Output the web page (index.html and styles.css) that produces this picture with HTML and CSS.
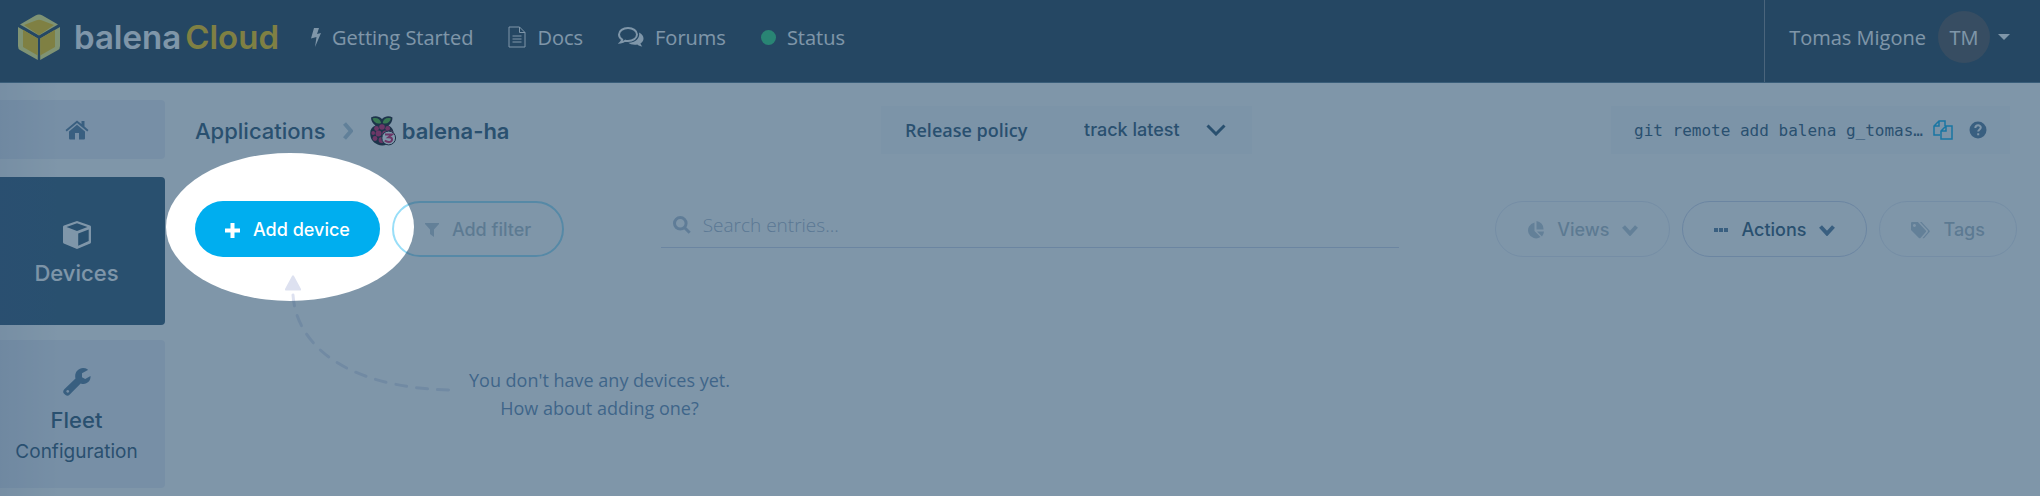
FILE: index.html
```
<!DOCTYPE html>
<html lang="en">
<head>
    <meta charset="UTF-8">
    <meta name="viewport" content="width=device-width, initial-scale=1.0">
    <title>balena-ha | balenaCloud</title>
    <link rel="stylesheet" href="styles.css">
</head>
<body>
    <div class="app">
        <!-- Top bar -->
        <header class="topbar">
            <a class="logo" href="#home">
                <svg class="logo-mark" viewBox="0 0 42 46" aria-hidden="true">
                    <path class="cube-outer" d="M2 10.500 17.500 1.400q3.500-2 7 0L40 10.500 21 21.500zM0 13 19.800 24.500V46L2 36Q0 35 0 32zM42 13 22.200 24.500V46L40 36q2-1 2-4z"/>
                    <path class="cube-inner" d="M6 11 18.500 6.200q2.500-1 5 0L36 11 21 21.200zM5 15.800 19.800 24.500V41.500L5 33zM37 15.800 22.200 24.500V41.500L37 33z"/>
                </svg>
                <span class="logo-text">balena<span class="accent">Cloud</span></span>
            </a>
            <nav class="topnav">
                <a href="#start">
                    <svg class="icon-bolt" viewBox="0 0 10 19" aria-hidden="true"><path d="M3 0h5L6 6l4-1L4 19l1.500-10L0 10.500z"/></svg>
                    <span>Getting Started</span>
                </a>
                <a href="#docs">
                    <svg class="icon-doc" viewBox="0 0 18 22" aria-hidden="true"><path class="line" d="M1 1h10.500L17 6.500V21H1zM11.500 1v5.500H17M4.500 10h9M4.500 13h9M4.500 16h9"/></svg>
                    <span>Docs</span>
                </a>
                <a href="#forums">
                    <svg class="icon-chat" viewBox="0 0 26 20" aria-hidden="true"><path class="line" d="M10 1c5 0 9 2.900 9 6.500S15 14 10 14c-1 0-2 0-2.800-.3C5.800 14.700 4 15.300 2.500 15.500c1-.9 1.500-1.800 1.700-3C2.200 11.300 1 9.500 1 7.500 1 3.900 5 1 10 1z"/><path d="M21 5.500c6 3 5.500 8.500 1.500 10.800.2 1.300 1 2.200 1.800 3.200-2.300-.2-3.800-.9-5-2-4 .6-7.300-.3-9-1.800 7 .3 12-4.200 10.700-10.200z"/></svg>
                    <span>Forums</span>
                </a>
                <a href="#status">
                    <span class="status-dot"></span>
                    <span>Status</span>
                </a>
            </nav>
            <button class="account" type="button">
                <span>Tomas Migone</span>
                <span class="avatar">TM</span>
                <svg class="icon-caret" viewBox="0 0 12 6" aria-hidden="true"><path d="M0 0h12L6 6z"/></svg>
            </button>
        </header>

        <div class="layout">
            <!-- Sidebar -->
            <nav class="sidebar">
                <a class="side-item side-home" href="#apps" aria-label="Home">
                    <svg class="icon-home" viewBox="0 0 24 20" aria-hidden="true"><path d="M12 4.800 20 11.500V18.500q0 1-1 1h-5V13h-4v6.500H5q-1 0-1-1v-7zM12 .5 16.500 4V1h3v5.600L23.500 10l-1.200 1.500L12 3 1.700 11.500.5 10z"/></svg>
                </a>
                <a class="side-item active" href="#devices">
                    <svg class="icon-cube" viewBox="0 0 28 28" aria-hidden="true"><path fill-rule="evenodd" d="M14 0 27 4.500q1 .4 1 1.500v15q0 1-.8 1.500L14 28 .8 22.500Q0 22 0 21V6q0-1.100 1-1.500zM14 2.300 3.500 6 14 10 24.500 6zM25.700 8.500 15.200 12.600v12.200L25.700 20z"/></svg>
                    <span class="side-title">Devices</span>
                </a>
                <a class="side-item" href="#fleet">
                    <svg class="icon-wrench" viewBox="0 0 28 28" aria-hidden="true"><path fill-rule="evenodd" d="M24 2.500 19 5.200v4l3.200 1.800L27.500 8C28 12 25 16 20.500 16q-1.500 0-2.800-.5L6.800 26.500q-2 2-4.300.6l-1.600-1.600q-1.600-2 .4-4.300L12.500 10.500C11 5 15 0 20 0q2.500 0 4.500 1.200.8.600-.5 1.300zM4.700 22a1.400 1.400 0 1 0 .1 0z"/></svg>
                    <span class="side-title">Fleet</span>
                    <span class="side-sub">Configuration</span>
                </a>
            </nav>

            <!-- Main content -->
            <main class="main">
                <div class="heading">
                    <div class="breadcrumb">
                        <a href="#apps">Applications</a>
                        <svg class="icon-next" viewBox="0 0 10 18" aria-hidden="true"><path class="line" d="M1.500 1.500 8 9l-6.500 7.500"/></svg>
                        <span class="app-name">
                            <svg class="icon-pi" viewBox="0 0 26 30" aria-hidden="true">
                                <path class="pi-dark" d="M1 1.500C5-.5 9 0 12 3c3-3 7-3.500 10.500-1.500C22.500 5 21 8 18.500 9.500c4.500 2 6 7 5 10.500C23 25 17 30 12 29.500 6 29 1 25 .5 20-.5 15 1 11 5.500 9.500 3 8 1 5 1 1.500z"/>
                                <path class="pi-leaf" d="M2.500 2.500c4-1.300 7.500 0 8.700 4.500-4.200 1.600-7.500-.7-8.700-4.500zM21 2.500c-4-1.300-7.500 0-8.300 4.500 4 1.600 7.200-.7 8.300-4.500z"/>
                                <g class="pi-berry"><circle cx="12" cy="11" r="2.800"/><circle cx="6.500" cy="12.500" r="2.400"/><circle cx="17.700" cy="12.500" r="2.400"/><circle cx="8.500" cy="17.500" r="3"/><circle cx="15.300" cy="17.500" r="3"/><circle cx="3.200" cy="17" r="1.900"/><circle cx="5" cy="22.500" r="2.400"/><circle cx="11.500" cy="24" r="2.900"/><circle cx="21" cy="16.500" r="1.900"/></g>
                                <circle class="pi-badge" cx="18.700" cy="22" r="6.900"/>
                                <path class="pi-digit" d="M15 18.500h7l-3.500 2.800c4.800 0 4.600 4.600.3 4.600q-2.400 0-4-1.400"/>
                            </svg>
                            balena-ha
                        </span>
                    </div>
                    <div class="panel release">
                        <label for="release">Release policy</label>
                        <span class="select-wrap">
                            <select id="release"><option>track latest</option></select>
                            <svg class="icon-select" viewBox="0 0 20 12" aria-hidden="true"><path class="line" d="M1.500 1.500 10 10l8.500-8.500"/></svg>
                        </span>
                    </div>
                    <div class="panel remote">
                        <code>git remote add balena g_tomas…</code>
                        <button class="icon-btn copy" type="button" aria-label="Copy">
                            <svg class="icon-copy" viewBox="0 0 20 20" aria-hidden="true"><path class="line" d="M7 15H1V6l5-5h6v5M6 1v5H1M8 11l5-5h6v13H8zM13 6v5H8"/></svg>
                        </button>
                        <button class="icon-btn" type="button" aria-label="Help">
                            <svg class="icon-help" viewBox="0 0 18 18" aria-hidden="true"><circle cx="9" cy="9" r="8.500"/><path class="help-mark" d="M6.300 7c.2-3.600 5.500-3.300 5.500-.4 0 1.800-2.600 1.900-2.600 4M9.200 12.300v2"/></svg>
                        </button>
                    </div>
                </div>

                <div class="toolbar">
                    <div class="spot-anchor">
                        <button class="btn btn-primary" type="button">
                            <svg class="icon-plus" viewBox="0 0 15 15" aria-hidden="true"><path d="M5.500 0h4v5.500H15v4H9.500V15h-4V9.500H0v-4h5.500z"/></svg>
                            Add device
                        </button>
                        <div class="spotlight"></div>
                    </div>
                    <button class="btn btn-filter" type="button" disabled>
                        <svg class="icon-filter" viewBox="0 0 14 14" aria-hidden="true"><path d="M0 0h14v1L9 6.500V14l-4-3V6.500L0 1z"/></svg>
                        Add filter
                    </button>
                    <div class="search">
                        <svg class="icon-search" viewBox="0 0 18 18" aria-hidden="true"><circle class="line" cx="7.300" cy="7.300" r="5.800"/><path class="line" d="m11.700 11.700 5 5"/></svg>
                        <input type="text" placeholder="Search entries..." aria-label="Search entries">
                    </div>
                    <div class="toolbar-end">
                        <button class="btn btn-muted" type="button" disabled>
                            <svg class="icon-pie" viewBox="0 0 17 18" aria-hidden="true"><path d="M7.500 1.500V10l6 6A8 8 0 1 1 7.500 1.500zM9.500 0A8 8 0 0 1 16.500 8.500H9.500zM10 10.500h7q-.3 3-2 5z"/></svg>
                            Views
                            <svg class="icon-down" viewBox="0 0 16 11" aria-hidden="true"><path class="line" d="M1.500 1.500 8 8.500l6.500-7"/></svg>
                        </button>
                        <button class="btn btn-outline" type="button">
                            <svg class="icon-dots" viewBox="0 0 14 4" aria-hidden="true"><path d="M0 0h4v4H0zM5 0h4v4H5zM10 0h4v4h-4z"/></svg>
                            Actions
                            <svg class="icon-down" viewBox="0 0 16 11" aria-hidden="true"><path class="line" d="M1.500 1.500 8 8.500l6.500-7"/></svg>
                        </button>
                        <button class="btn btn-muted" type="button" disabled>
                            <svg class="icon-tags" viewBox="0 0 18 16" aria-hidden="true"><path fill-rule="evenodd" d="M0 1q0-1 1-1h5.500L14 8q.6.8 0 1.500L9 15q-.7.700-1.500 0L0 7.500zM3.200 1.800a1.400 1.400 0 1 0 .1 0zM8.500 0h1.500l7.500 8q.6.800 0 1.500L12.500 15q-.8.600-1.500.2L16 9.500V8z"/></svg>
                            Tags
                        </button>
                    </div>
                </div>

                <!-- Empty state -->
                <div class="empty">
                    <svg class="arrow" viewBox="0 0 168 120" aria-hidden="true">
                        <path class="arrow-head" d="M9 2q1-1.500 2 0l7 13q.5 1.500-1 1.500H3Q1.500 16.500 2 15z"/>
                        <path class="arrow-line" d="M10 21C13 68 58 113 166 116"/>
                    </svg>
                    <p>You don't have any devices yet.<br>How about adding one?</p>
                </div>
            </main>
        </div>
    </div>
</body>
</html>
```
FILE: styles.css
```
:root {
    --primary: #2a506f;
    --tertiary: #527699;
    --header: #1e3a50;
    --yellow: #ffc800;
    --blue: #00aeef;
    --line: #ccd4ec;
    --box: #ebeef7;
    --ui: Inter, sans-serif;
    --text: "Open Sans", sans-serif;
}

/* Base */
* { margin: 0; padding: 0; box-sizing: border-box; }
body { font-family: var(--text); font-size: 20px; color: var(--primary); background: white; }
a { color: inherit; text-decoration: none; }
button { font: inherit; color: inherit; background: none; border: none; cursor: pointer; }
svg { display: block; flex: none; fill: currentColor; }
.line { fill: none; stroke: currentColor; stroke-width: 2; }
.app { position: relative; height: 100vh; overflow: hidden; display: flex; flex-direction: column; }

/* Top bar */
.topbar {
    flex: none; height: 83px; padding: 0 30px 8px 18px; display: flex; align-items: center;
    color: white; background: var(--header); border-bottom: 1px solid #527088;
}
.logo { display: flex; align-items: center; gap: 14px; }
.logo-mark { width: 42px; height: 46px; }
.cube-outer { fill: #fff77a; }
.cube-inner { fill: var(--yellow); }
.logo-text { font: 600 33px/36px var(--ui); }
.accent { margin-left: 4px; color: var(--yellow); }
.topnav { margin-left: 32px; display: flex; gap: 35px; }
.topnav a { display: flex; align-items: center; gap: 11px; }
.icon-bolt { width: 10px; height: 19px; }
.icon-doc { width: 18px; height: 22px; }
.icon-doc .line { stroke-width: 1; }
.icon-chat { width: 26px; height: 20px; }
.status-dot { width: 15px; height: 15px; border-radius: 50%; background: #2ad47a; }
.account {
    align-self: stretch; margin: 0 0 -8px auto; padding: 0 0 8px 24px;
    display: flex; align-items: center; border-left: 1px solid #7d868e;
}
.avatar {
    width: 52px; height: 52px; margin: 0 8px 0 12px; border-radius: 50%;
    display: flex; align-items: center; justify-content: center; background: #4b4a4e;
}
.icon-caret { width: 12px; height: 6px; }

/* Sidebar */
.layout { position: relative; flex: 1; display: flex; align-items: flex-start; }
.layout::after {
    content: ""; position: absolute; inset: 0 auto 0 0; width: 60px; pointer-events: none;
    background: linear-gradient(to right, rgba(50, 70, 130, 0.1), transparent);
}
.sidebar { flex: none; width: 165px; padding-top: 17px; display: grid; gap: 15px; font: 500 22px/28px var(--ui); }
.side-item {
    height: 148px; padding: 6px 12px 0 0; display: flex; flex-direction: column;
    align-items: center; justify-content: center; background: var(--box); border-radius: 0 4px 4px 0;
}
.side-item svg { color: var(--tertiary); }
.side-home { height: 59px; margin-bottom: 3px; padding-top: 0; }
.side-item.active, .side-item.active svg { color: white; }
.side-item.active { background: var(--primary); }
.side-title { margin-top: 10px; }
.side-sub { padding-top: 4px; font-size: 19px; font-weight: 400; }
.icon-home { width: 24px; height: 20px; }
.icon-cube, .icon-wrench { width: 28px; height: 28px; }

/* Heading */
.main { flex: 1; padding: 23px 23px 0 30px; }
.heading { display: grid; grid-template-columns: 686px 371px 1fr; align-items: center; padding-right: 7px; }
.breadcrumb { display: flex; align-items: center; gap: 17px; padding-top: 2px; font: 500 22px/30px var(--ui); }
.icon-next { width: 10px; height: 18px; color: #b4c8d8; }
.icon-next .line { stroke-width: 4; }
.app-name { display: flex; gap: 6px; font-weight: 600; }
.icon-pi { width: 26px; height: 30px; }
.pi-dark { fill: #0a0a14; }
.pi-leaf { fill: #4fb52c; }
.pi-berry { fill: #d0125a; }
.pi-badge { fill: white; stroke: #0a0a14; stroke-width: 1; }
.pi-digit { fill: none; stroke: #d0125a; stroke-width: 2; }
.panel { height: 48px; padding: 0 23px; display: flex; align-items: center; background: #f8f9fd; }
.release { justify-content: space-between; padding: 0 26px 0 24px; font-size: 18px; font-weight: 600; }
.select-wrap { display: flex; align-items: center; }
.select-wrap select {
    appearance: none; width: 142px; margin-right: -20px; border: none; background: none;
    color: inherit; font: 500 18px/28px var(--ui);
}
.icon-select { width: 20px; height: 12px; pointer-events: none; }
.icon-select .line { stroke-width: 3; }
.remote { justify-self: end; }
.remote code { font: 16px "DejaVu Sans Mono", monospace; }
.icon-btn { margin-left: 16px; color: var(--tertiary); }
.icon-btn.copy { margin-left: 10px; color: var(--blue); }
.icon-copy { width: 20px; height: 20px; }
.icon-copy .line { stroke-width: 1.5; }
.icon-help { width: 18px; height: 18px; }
.help-mark { fill: none; stroke: white; stroke-width: 2; }

/* Toolbar */
.toolbar { margin-top: 47px; display: flex; align-items: center; }
.btn {
    height: 56px; padding: 2px 31px 0; display: flex; align-items: center; gap: 13px;
    border: 1px solid transparent; border-radius: 28px; font: 500 18px/28px var(--ui);
}
.btn-primary { padding: 2px 29px 0; color: white; background: var(--blue); }
.btn-filter { margin-left: 12px; border: 2px solid var(--blue); color: var(--primary); opacity: 0.4; }
.btn-outline { border-color: var(--line); }
.btn-muted { border-color: #bec8e6; color: var(--primary); opacity: 0.4; }
.icon-plus { width: 15px; height: 15px; }
.icon-filter { width: 14px; height: 14px; }
.icon-pie { width: 17px; height: 18px; }
.icon-dots { width: 14px; height: 4px; }
.icon-tags { width: 19px; height: 17px; }
.icon-down { width: 16px; height: 11px; }
.icon-down .line { stroke-width: 4; }
.btn svg { color: var(--tertiary); }
.btn-primary svg { color: white; }
.search {
    flex: 1; max-width: 738px; height: 38px; margin: 0 auto; padding: 0 12px 8px;
    display: flex; align-items: center; gap: 12px; border-bottom: 1px solid var(--line);
}
.icon-search { width: 18px; height: 18px; color: #aebfd3; }
.icon-search .line { stroke-width: 3; }
.search input { flex: 1; border: none; outline: none; background: none; font: 300 19px/28px var(--text); }
.search input::placeholder { color: #a4b3ca; }
.toolbar-end { display: flex; gap: 12px; }

/* Spotlight over the first action, dims the rest of the page */
.spot-anchor { position: relative; }
.spotlight {
    position: absolute; left: -29px; top: -48px; z-index: 10; width: 248px; height: 148px;
    border-radius: 50%; box-shadow: 0 0 0 3000px rgba(42, 80, 111, 0.6); pointer-events: none;
}

/* Empty state */
.empty { display: flex; padding: 17px 0 0 88px; gap: 18px; color: #5f86b0; }
.empty p { padding-top: 92px; font-size: 18px; line-height: 28px; text-align: center; }
.arrow { width: 168px; height: 120px; }
.arrow-head { fill: #dde1f0; }
.arrow-line { fill: none; stroke: #dde1f0; stroke-width: 3; stroke-dasharray: 11 10; stroke-linecap: round; }
```
